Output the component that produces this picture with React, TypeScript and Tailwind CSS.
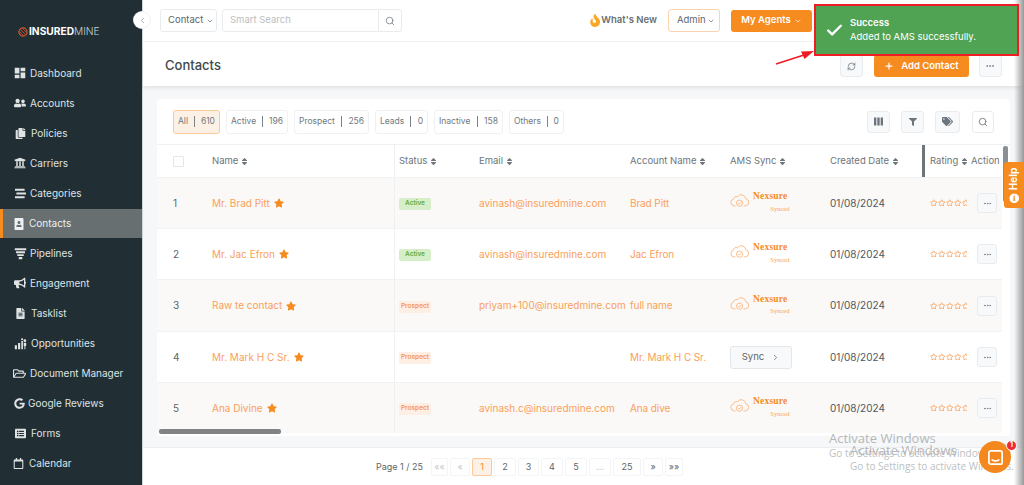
import React from "react";
import { Search, ChevronDown, ChevronLeft, ChevronRight, RefreshCw, Plus, Ellipsis, Check } from "lucide-react";
import { FaUserFriends, FaCopy, FaUniversity, FaStream, FaPortrait, FaBullhorn, FaRegFolderOpen, FaGoogle, FaRegCalendar, FaFire, FaStar, FaRegStar, FaFilter, FaTags, FaInfoCircle, FaSort, FaFileAlt, FaListAlt } from "react-icons/fa";
import { MdDashboard } from "react-icons/md";

const Pipe = () => (
  <svg viewBox="0 0 16 16" className="w-[13px] h-[13px]" fill="currentColor"><path d="M1 1.5h14v2.5H1zM2.5 5.2h11v2.4h-11zM4 8.8h8v2.4H4zM5.8 12.4h4.4V15H5.8z" /></svg>
);
const Opp = () => (
  <svg viewBox="0 0 16 16" className="w-[13px] h-[13px]" fill="currentColor"><path d="M1 10h2.6v5H1zM5 7.5h2.6V15H5zM9 4.8h2v10.2H9zM12 7h3v4h-1v4h-1.2v-4H12z" /><circle cx="13.4" cy="4.6" r="1.7" /><circle cx="10" cy="2.8" r="1.3" /></svg>
);
const Bars = () => (
  <svg viewBox="0 0 10 10" className="w-[9px] h-[9px]" fill="currentColor"><path d="M0 .5h2.6v9H0zM3.7 .5h2.6v9H3.7zM7.4 .5H10v9H7.4z" /></svg>
);
const SyncCloud = () => (
  <svg viewBox="0 0 22 16" className="w-[20px] h-[16px]" fill="none" stroke="#fbb77f" strokeWidth="1"><path d="M6 14.5H4.5a3.8 3.8 0 01-.6-7.5 3.4 3.4 0 014.3-2.6A5 5 0 0117.3 6.6a4 4 0 01-.3 7.9h-2" /><circle cx="10.5" cy="11.5" r="3.4" /><path d="M9 11.5l1.2 1 1.8-2" /></svg>
);

const nav: [string, React.ReactNode, string, string][] = [
  ["Dashboard", <MdDashboard size={14} />, "pl-[13px]", "ml-[3px]"],
  ["Accounts", <FaUserFriends size={12} />, "pl-[14px]", "ml-[4px]"],
  ["Policies", <FaCopy size={11} />, "pl-[15px]", "ml-[5px]"],
  ["Carriers", <FaUniversity size={12} />, "pl-[14px]", "ml-[4px]"],
  ["Categories", <FaStream size={11} />, "pl-[15px]", "ml-[4px]"],
  ["Contacts", <FaPortrait size={12} />, "", ""],
  ["Pipelines", <Pipe />, "pl-[14px]", "ml-[3px]"],
  ["Engagement", <FaBullhorn size={12} />, "pl-[14px]", "ml-[4px]"],
  ["Tasklist", <FaFileAlt size={11} />, "pl-[15px]", "ml-[5px]"],
  ["Opportunities", <Opp />, "pl-[14px]", "ml-[4px]"],
  ["Document Manager", <FaRegFolderOpen size={13} />, "pl-[13px]", "ml-[4px]"],
  ["Google Reviews", <FaGoogle size={11} />, "pl-[14px]", "ml-[3px]"],
  ["Forms", <FaListAlt size={11} />, "pl-[15px]", "ml-[5px]"],
  ["Calendar", <FaRegCalendar size={11} />, "pl-[13px]", "ml-[5px]"],
];

const chips: [string, string, string][] = [
  ["All", "610", "w-[47px]"],
  ["Active", "196", "w-[62px]"],
  ["Prospect", "256", "w-[75px]"],
  ["Leads", "0", "w-[53px]"],
  ["Inactive", "158", "w-[69px]"],
  ["Others", "0", "w-[55px]"],
];

const cols = "grid grid-cols-[55px_182px_85px_151px_100px_100px_100px_41px_31px] w-[845px]";

type Row = { n: number; h: string; name: string; status: "Active" | "Prospect"; email: string; acct: string; sync: boolean };
const rows: Row[] = [
  { n: 1, h: "h-[51px]", name: "Mr. Brad Pitt", status: "Active", email: "avinash@insuredmine.com", acct: "Brad Pitt", sync: true },
  { n: 2, h: "h-[51px]", name: "Mr. Jac Efron", status: "Active", email: "avinash@insuredmine.com", acct: "Jac Efron", sync: true },
  { n: 3, h: "h-[52px]", name: "Raw te contact", status: "Prospect", email: "priyam+100@insuredmine.com", acct: "full name", sync: true },
  { n: 4, h: "h-[51px]", name: "Mr. Mark H C Sr.", status: "Prospect", email: "", acct: "Mr. Mark H C Sr.", sync: false },
  { n: 5, h: "h-[51px]", name: "Ana Divine", status: "Prospect", email: "avinash.c@insuredmine.com", acct: "Ana dive", sync: true },
];

const Head = ({ t, sort = true, cls = "" }: { t: string; sort?: boolean; cls?: string }) => (
  <div className={`flex items-center gap-[2px] text-[9.5px] text-[#6d757a] whitespace-nowrap ${cls}`}>
    {t}
    {sort && <FaSort size={9} className="text-[#6d757a]" />}
  </div>
);

const IconBtn = ({ children, cls = "" }: { children: React.ReactNode; cls?: string }) => (
  <div className={`h-[22px] flex items-center justify-center rounded-[3px] border border-[#e9ecef] bg-[#f8f9fa] text-[#6c757d] ${cls}`}>{children}</div>
);

const pages: [string, string, string][] = [
  ["««", "w-[17px]", "text-[#c4c8cc]"],
  ["«", "w-[20px]", "text-[#c4c8cc]"],
  ["1", "w-[20px]", ""],
  ["2", "w-[22px]", ""],
  ["3", "w-[21px]", ""],
  ["4", "w-[22px]", ""],
  ["5", "w-[22px]", ""],
  ["...", "w-[22px]", "text-[#c4c8cc]"],
  ["25", "w-[28px]", ""],
  ["»", "w-[20px]", ""],
  ["»»", "w-[18px]", ""],
];

export default function App() {
  return (
    <div className="relative flex w-[1024px] h-[485px] overflow-hidden bg-white font-['Inter',sans-serif]">
      <aside className="w-[143px] shrink-0 bg-[#212f35] flex flex-col border-r border-[#cfd4d6]">
        <div className="h-[58px] pl-[18px] pt-[25px] flex items-start">
          <div className="flex items-center gap-[1px] h-[13px] text-[10.2px] leading-none text-white">
            <svg viewBox="0 0 16 16" className="w-[10px] h-[10px]" fill="none" stroke="#d2562c" strokeWidth="2"><circle cx="8" cy="8" r="6.5" /><path d="M3.5 3.5l9 9M7 2l7 7M2 7l7 7" strokeWidth="1.3" /></svg>
            <span className="font-bold">INSURED</span><span className="-ml-[1px] font-light text-[#cdd2d4]">MINE</span>
          </div>
        </div>
        {nav.map(([label, icon, pl, ml]) =>
          label === "Contacts" ? (
            <div key={label} className="mt-px h-[29px] w-[142px] flex items-center bg-[#676f70] border-l-[3px] border-[#f68b1f] pl-[10px] text-[#eef0f1] text-[10px]">
              {icon}
              <span className="ml-[4px]">{label}</span>
            </div>
          ) : (
            <div key={label} className={`h-[30px] flex items-center text-[#dfe3e4] text-[10px] whitespace-nowrap ${pl}`}>
              {icon}
              <span className={ml}>{label}</span>
            </div>
          )
        )}
      </aside>

      <main className="flex-1 flex flex-col min-w-0">
        <header className="h-[42px] shrink-0 flex items-center pl-[17px] border-b border-[#f1f2f3]">
          <div className="w-[57px] h-[23px] flex items-center justify-between pl-[7px] pr-[2px] border border-[#e9ecef] rounded-[3px] text-[9.5px] text-[#5c666b]">Contact<ChevronDown size={8} /></div>
          <div className="ml-[5px] w-[157px] h-[23px] flex items-center pl-[7px] border border-[#e9ecef] rounded-l-[3px] text-[9.5px] text-[#b9bec1]">Smart Search</div>
          <div className="w-[23px] h-[23px] flex items-center justify-center border border-l-0 border-[#e9ecef] rounded-r-[3px] text-[#7b8388]"><Search size={10} /></div>
          <div className="ml-[188px] w-[67px] flex items-center font-semibold text-[9.5px] text-[#6a6f72] whitespace-nowrap"><FaFire size={13} className="text-[#f9a825] mr-[1px]" />What's New</div>
          <div className="ml-[11px] w-[52px] h-[23px] flex items-center justify-between pl-[8px] pr-[4px] border border-[#fbd3ae] rounded-[3px] text-[9.5px] text-[#5c666b]">Admin<ChevronDown size={8} /></div>
          <div className="ml-[11px] w-[81px] h-[22px] flex items-center justify-center gap-[3px] rounded-[3px] bg-[#f68b1f] text-white font-semibold text-[9.5px]">My Agents<ChevronDown size={8} /></div>
        </header>

        <div className="h-[44px] shrink-0 flex items-center pl-[22px] pt-[4px] relative z-10 shadow-[0_2px_4px_rgba(0,0,0,0.09)] bg-white">
          <h1 className="text-[13px] font-medium text-[#3e484d]">Contacts</h1>
          <IconBtn cls="ml-[619px] w-[23px]"><RefreshCw size={9} /></IconBtn>
          <div className="ml-[11px] w-[95px] h-[22px] flex items-center justify-center gap-[7px] rounded-[3px] bg-[#f68b1f] text-white font-semibold text-[9.5px]"><Plus size={10} strokeWidth={3} />Add Contact</div>
          <IconBtn cls="ml-[10px] w-[23px]"><Ellipsis size={10} /></IconBtn>
        </div>

        <div className="flex-1 min-h-0 bg-[#f6f7f9] pl-[14px] pt-[13px] pr-[14px] border-b border-[#eceef0]">
          <section className="bg-white rounded-[3px] h-[337px] overflow-hidden">
            <div className="h-[46px] pl-[16px] flex items-center gap-[6px] border-b border-[#f0f1f3]">
              {chips.map(([t, c, w], i) => (
                <div key={t} className={`${w} h-[24px] flex items-center justify-between px-[4px] rounded-[3px] border text-[8.5px] text-[#71797e] ${i === 0 ? "border-[#fbc99b] bg-[#fdf1e6]" : "border-[#f0f1f3]"}`}>
                  <span>{t}</span>
                  <span className="w-px h-[11px] bg-[#7b858b]" />
                  <span>{c}</span>
                </div>
              ))}
              <IconBtn cls="ml-[297px] w-[23px]"><Bars /></IconBtn>
              <IconBtn cls="ml-[5px] w-[23px]"><FaFilter size={8} /></IconBtn>
              <IconBtn cls="ml-[5px] w-[25px]"><FaTags size={11} /></IconBtn>
              <IconBtn cls="ml-[6px] w-[22px] !bg-white"><Search size={10} /></IconBtn>
            </div>

            <div className={`${cols} h-[32px] items-center`}>
              <div className="pl-[16px]"><div className="w-[11px] h-[11px] border border-[#e4e6e8] rounded-[1px]" /></div>
              <Head t="Name" />
              <div className="self-stretch flex items-center border-l border-[#eff0f2] pl-[4px]"><Head t="Status" /></div>
              <Head t="Email" />
              <Head t="Account Name" />
              <Head t="AMS Sync" />
              <Head t="Created Date" />
              <Head t="Rating" />
              <Head t="Action" sort={false} />
            </div>

            {rows.map((r) => (
              <div key={r.n} className={`${cols} ${r.h} items-center border-t border-[#f1f2f3] ${r.n % 2 ? "bg-[#fbf9f7]" : "bg-white"}`}>
                <div className="pl-[16px] text-[10px] text-[#5c666b]">{r.n}</div>
                <div className="flex items-center gap-[4px] text-[10px] text-[#f9a05a] whitespace-nowrap">{r.name}<FaStar size={10} className="text-[#f68b1f]" /></div>
                <div className="self-stretch flex items-center border-l border-[#eff0f2] pl-[4px]">
                  <span className={`mt-[2px] w-[32px] h-[12px] flex items-center justify-center rounded-[2px] text-[6.5px] font-semibold ${r.status === "Active" ? "bg-[#d6efc9] text-[#64ab41]" : "bg-[#fdefe3] text-[#f59a55]"}`}>{r.status}</span>
                </div>
                <div className="text-[10px] text-[#f9a05a] whitespace-nowrap">{r.email}</div>
                <div className="text-[10px] text-[#f9a05a] whitespace-nowrap tracking-[-0.1px]">{r.acct}</div>
                <div>
                  {r.sync ? (
                    <div className="flex items-start -mt-[2px]">
                      <SyncCloud />
                      <div className="ml-[3px] flex flex-col font-['Liberation_Serif',serif] leading-none">
                        <span className="text-[9.5px] font-bold text-[#f68b1f] tracking-[0.2px]">Nexsure</span>
                        <span className="text-[6.5px] text-[#f9a05a] self-end mt-[4px] -mr-[2px]">Synced</span>
                      </div>
                    </div>
                  ) : (
                    <div className="w-[62px] h-[23px] flex items-center justify-center gap-[7px] border border-[#e4e7ea] bg-[#f8f9fa] rounded-[3px] text-[9.5px] text-[#5c666b]">Sync<ChevronRight size={9} /></div>
                  )}
                </div>
                <div className="text-[10px] text-[#4d575c] whitespace-nowrap">01/08/2024</div>
                <div className="flex w-[37px] overflow-hidden gap-[0.5px] text-[#f9a05a]">
                  {[0, 1, 2, 3, 4].map((s) => (<FaRegStar key={s} size={7.5} className="shrink-0" />))}
                </div>
                <div className="flex"><IconBtn cls="w-[20px] h-[20px]! ml-[6px]"><Ellipsis size={9} /></IconBtn></div>
              </div>
            ))}
          </section>
        </div>

        <footer className="h-[37px] shrink-0 flex items-center pl-[233px] pt-px">
          <span className="w-[44px] text-[9px] text-[#5c666b] whitespace-nowrap">Page 1 / 25</span>
          <div className="ml-[11px] flex gap-[2px]">
            {pages.map(([t, w, c]) => (
              <div key={t} className={`${w} h-[18px] flex items-center justify-center rounded-[2px] border text-[9px] ${t === "1" ? "border-[#fbc99b] bg-[#fdf1e6] text-[#f68b1f]" : `border-[#f3f4f5] text-[#5c666b] ${c}`}`}>{t}</div>
            ))}
          </div>
        </footer>
      </main>

      {/* overlays */}
      <div className="absolute z-20 left-[134px] top-[12px] w-[16px] h-[16px] rounded-full bg-white flex items-center justify-center text-[#8b9296] shadow-[0_0_0_1px_#eef0f1]"><ChevronLeft size={9} /></div>

      <div className="absolute left-[922px] top-[145px] w-[3px] h-[32px] bg-[#6c757b]" />
      <div className="absolute left-[1003px] top-[146px] w-[5px] h-[56px] rounded-[2px] bg-[#8a9094]" />
      <div className="absolute left-[159px] top-[429px] w-[122px] h-[5px] rounded-[2px] bg-[#7f8386]" />

      <div className="absolute z-20 right-0 top-0 h-full w-[10px] bg-gradient-to-r from-transparent to-[#989898]" />

      <div className="absolute z-20 left-[1004px] top-[162px] w-[20px] h-[46px] bg-[#f68b1f] rounded-l-[3px] flex items-center justify-center">
        <div className="-rotate-90 flex items-center gap-[3px] text-white font-bold text-[10px] whitespace-nowrap"><FaInfoCircle size={10} className="rotate-90" />Help</div>
      </div>

      <div className="absolute z-30 left-[814px] top-[4px] w-[205px] h-[52px] bg-[#4fa353] border-2 border-[#ee1c25] flex items-center text-white">
        <Check size={19} strokeWidth={3} className="ml-[9px]" />
        <div className="ml-[6px] text-[9.5px] leading-[14px]">
          <div className="font-semibold">Success</div>
          <div className="whitespace-nowrap">Added to AMS successfully.</div>
        </div>
      </div>
      <svg className="absolute z-30 left-[774px] top-[48px]" width="42" height="18" viewBox="0 0 42 18"><path d="M2 16L30 7" stroke="#ee1c25" strokeWidth="1.6" /><path d="M40 3L27 3.5L30.5 11z" fill="#ee1c25" /></svg>

      <div className="absolute left-[829px] top-[430px] text-[13px] text-[#b4b7ba] font-['Open_Sans',sans-serif] whitespace-nowrap leading-[16px]">Activate Windows</div>
      <div className="absolute left-[829px] top-[446px] text-[10px] text-[#bcbfc2] font-['Open_Sans',sans-serif] whitespace-nowrap leading-[14px]">Go to Settings to activate Windows.</div>
      <div className="absolute left-[850px] top-[442px] text-[13px] text-[#b4b7ba] font-['Open_Sans',sans-serif] whitespace-nowrap leading-[16px]">Activate Windows</div>
      <div className="absolute left-[850px] top-[459px] text-[10px] text-[#bcbfc2] font-['Open_Sans',sans-serif] whitespace-nowrap leading-[14px]">Go to Settings to activate Windows.</div>

      <div className="absolute z-30 left-[979px] top-[441px] w-[32px] h-[32px] rounded-full bg-[#f5871f] flex items-center justify-center">
        <svg viewBox="0 0 18 18" className="w-[17px] h-[17px]" fill="none" stroke="#fff" strokeWidth="1.8"><path d="M4 2h10a2 2 0 012 2v11a1 1 0 01-1 1H4a2 2 0 01-2-2V4a2 2 0 012-2z" /><path d="M5.5 11.5c2 1.3 5 1.3 7 0" strokeLinecap="round" /></svg>
      </div>
      <div className="absolute z-30 left-[1006px] top-[440px] w-[11px] h-[11px] rounded-full bg-[#ee2a37] text-white text-[7px] font-bold flex items-center justify-center border border-white">1</div>
    </div>
  );
}
